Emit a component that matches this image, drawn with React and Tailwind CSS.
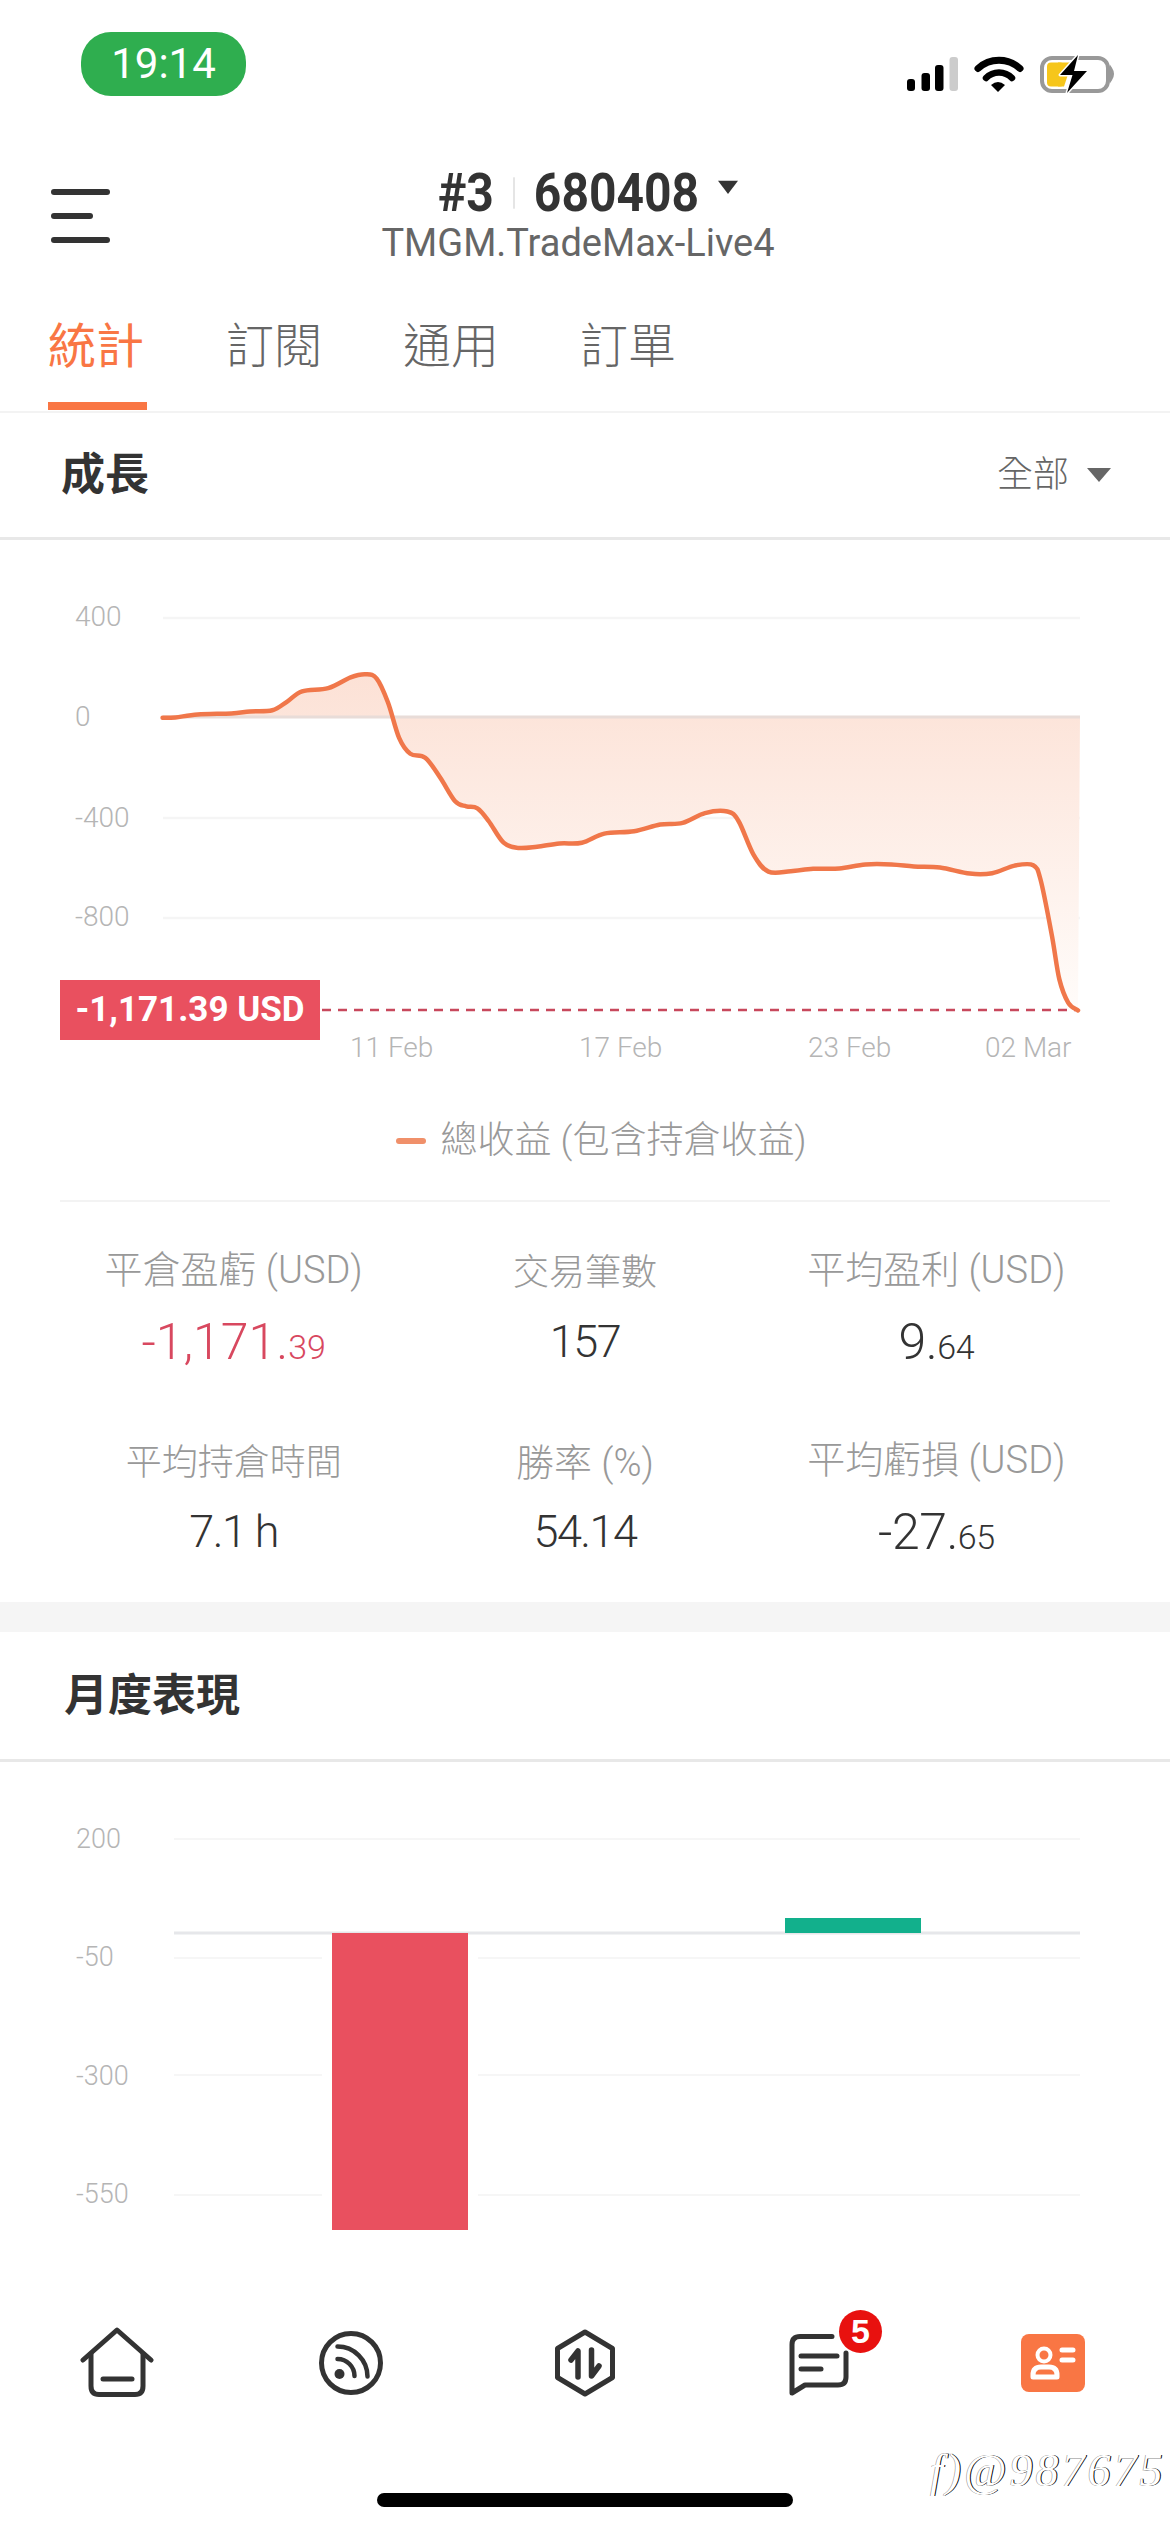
const pts = [[218,399],[235,398],[265,391],[310,388],[335,383],[365,380],[385,358],[405,332],[440,324],[470,297],[490,289],[505,300],[520,360],[535,450],[550,490],[570,500],[590,550],[610,610],[625,623],[640,628],[655,660],[675,715],[695,728],[720,725],[750,717],[780,715],[810,692],[850,686],[885,669],[915,665],[945,640],[975,636],[990,660],[1010,745],[1030,788],[1060,787],[1090,781],[1125,780],[1160,770],[1195,770],[1225,775],[1260,778],[1300,793],[1330,792],[1360,773],[1385,772],[1395,810],[1410,950],[1420,1060],[1432,1120],[1445,1139]].map(([x, y]) => [x * 0.746, 560 + y * 0.3954]);

function smooth(p) {
  let d = `M${p[0][0].toFixed(1)} ${p[0][1].toFixed(1)}`;
  for (let i = 0; i < p.length - 1; i++) {
    const a = p[Math.max(i - 1, 0)], b = p[i], c = p[i + 1], e = p[Math.min(i + 2, p.length - 1)];
    const c1 = [b[0] + (c[0] - a[0]) / 6, b[1] + (c[1] - a[1]) / 6];
    const c2 = [c[0] - (e[0] - b[0]) / 6, c[1] - (e[1] - b[1]) / 6];
    d += ` C${c1[0].toFixed(1)} ${c1[1].toFixed(1)} ${c2[0].toFixed(1)} ${c2[1].toFixed(1)} ${c[0].toFixed(1)} ${c[1].toFixed(1)}`;
  }
  return d;
}
const line = smooth(pts);
const area = `${line} L1080 717 L163 717 Z`;

function Stat({ label, children, lift, cjk }) {
  return (
    <div className="flex flex-col items-center">
      <div className={(lift ? "mt-[3px] " : "") + (cjk ? "text-[36px] " : "text-[38px] ") + "h-[40px] leading-[40px] text-[#999999] font-light whitespace-nowrap"}>{label}</div>
      <div className={lift ? "h-[60px] mt-[19px] text-[45px] leading-[60px] tracking-[-1.5px] text-[#333333] font-light whitespace-nowrap" : "h-[60px] mt-[22px] text-[45px] leading-[60px] tracking-[-1.5px] text-[#333333] font-light whitespace-nowrap"}>{children}</div>
    </div>
  );
}

const Big = ({ big, small, red }) => (
  <span className={red ? "text-[50px] tracking-[0px] text-[#d8485f]" : "text-[50px] tracking-[-0.5px]"}>
    {big}<span className="text-[34px]">{small}</span>
  </span>
);

export default function App() {
  return (
    <div className="w-[1170px] h-[2532px] bg-white overflow-hidden relative flex flex-col [font-family:Roboto,'Noto_Sans_CJK_TC',sans-serif]">
      {/* status bar */}
      <div className="h-[130px] flex justify-between items-start pl-[81px] pr-[53px]">
        <div className="mt-[32px] w-[165px] h-[64px] rounded-[30px] bg-[#2fae4f] text-white text-[42px] leading-[64px] text-center">19:14</div>
        <svg viewBox="905 52 212 44" className="w-[212px] h-[44px] mt-[52px]">
          <rect x="907" y="79" width="8" height="12" rx="3" fill="#000" />
          <rect x="921.5" y="73" width="8.5" height="18" rx="3" fill="#000" />
          <rect x="935" y="65" width="8.5" height="26" rx="3" fill="#000" />
          <rect x="949.5" y="57" width="8.5" height="34" rx="3" fill="#cccccc" />
          <path d="M978 68.5A31 31 0 0 1 1020 68.5" fill="none" stroke="#000" strokeWidth="7" strokeLinecap="round" />
          <path d="M986 78A18 18 0 0 1 1012 78" fill="none" stroke="#000" strokeWidth="6.5" strokeLinecap="round" />
          <path d="M991 85Q998 79 1005 85L998 92Z" fill="#000" />
          <rect x="1042" y="58" width="66" height="33" rx="10" fill="none" stroke="#999999" strokeWidth="4" />
          <path d="M1111 68Q1115 74 1111 80Z" fill="#999999" stroke="#999999" strokeWidth="2" />
          <rect x="1047" y="62.5" width="17" height="24" rx="4" fill="#f6c61b" />
          <path d="M1058 62.5h14l-8 24h-6z" fill="#f6c61b" />
          <path d="M1078 55L1060 75H1072.5L1067 93L1087 71H1074Z" fill="#000" stroke="#fff" strokeWidth="3" strokeLinejoin="round" paintOrder="stroke" />
        </svg>
      </div>

      {/* header */}
      <div className="h-[160px] relative flex flex-col items-center pt-[35px] shrink-0">
        <div className="absolute left-[51px] top-[59px] flex flex-col gap-[18px]">
          <div className="w-[59px] h-[6px] rounded-full bg-[#333333]" />
          <div className="w-[42px] h-[6px] rounded-full bg-[#333333]" />
          <div className="w-[59px] h-[6px] rounded-full bg-[#333333]" />
        </div>
        <div className="flex items-center h-[56px] text-[48px] leading-[56px] font-bold text-[#333333] ml-[6px] scale-y-[1.12]">
          <span>#3</span>
          <span className="w-[2px] h-[28px] bg-[#e5e5e5] mx-[19px]" />
          <span>680408</span>
          <span className="w-0 h-0 border-x-[10px] border-x-transparent border-t-[12px] border-t-[#333333] ml-[19px] mb-[10px]" />
        </div>
        <div className="mr-[14px] text-[38px] leading-[44px] text-[#666666] whitespace-nowrap">TMGM.TradeMax-Live4</div>
      </div>

      {/* tabs */}
      <div className="h-[123px] border-b-2 border-[#f3f3f3] flex items-start pl-[48px] gap-[81px] text-[48px] leading-[60px] text-[#666666] shrink-0 font-light">
        <div className="w-[99px] h-[120px] pt-[27px] border-b-[8px] border-[#f97644] text-[#f97644] font-normal mr-[-2px] whitespace-nowrap">統計</div>
        <div className="pt-[27px] whitespace-nowrap">訂閱</div>
        <div className="pt-[27px] whitespace-nowrap">通用</div>
        <div className="pt-[27px] whitespace-nowrap">訂單</div>
      </div>

      {/* growth header */}
      <div className="h-[127px] border-b-[3px] border-[#e8e8e8] flex items-center justify-between pl-[61px] pr-[59px] shrink-0">
        <div className="text-[44px] font-bold text-[#333333] leading-[60px]">成長</div>
        <div className="flex items-center gap-[18px]">
          <span className="text-[36px] text-[#666666] font-light leading-[50px]">全部</span>
          <span className="w-0 h-0 border-x-[12px] border-x-transparent border-t-[14px] border-t-[#666666]" />
        </div>
      </div>

      {/* chart */}
      <div className="relative h-[570px] shrink-0">
        <svg viewBox="0 540 1170 570" className="w-[1170px] h-[570px] block">
          <defs>
            <linearGradient id="fillG" gradientUnits="userSpaceOnUse" x1="0" y1="660" x2="0" y2="1010">
              <stop offset="0" stopColor="#fce0d4" />
              <stop offset="1" stopColor="#fffcfa" />
            </linearGradient>
          </defs>
          {[618, 818, 918].map((y) => <line key={y} x1="163" x2="1080" y1={y} y2={y} stroke="#f5f5f5" strokeWidth="2.5" />)}
          <path d={area} fill="url(#fillG)" />
          <line x1="163" x2="1080" y1="717" y2="717" stroke="#e8dcd8" strokeWidth="3" />
          <line x1="322" x2="1078" y1="1010" y2="1010" stroke="#c8485c" strokeWidth="2.5" strokeDasharray="9 7" />
          <path d={line} fill="none" stroke="#f0774a" strokeWidth="4.5" strokeLinejoin="round" strokeLinecap="round" />
          <g fontSize="28" fontWeight="300" fill="#b5b5b5">
            <text x="75" y="626">400</text>
            <text x="75" y="726">0</text>
            <text x="75" y="827">-400</text>
            <text x="75" y="926">-800</text>
            <text x="350" y="1057">11 Feb</text>
            <text x="579" y="1057">17 Feb</text>
            <text x="808" y="1057">23 Feb</text>
            <text x="985" y="1057">02 Mar</text>
          </g>
        </svg>
        <div className="absolute left-[60px] top-[440px] w-[260px] h-[60px] bg-[#e9505f] text-white text-[35px] font-bold leading-[60px] text-center whitespace-nowrap">-1,171.39 USD</div>
      </div>

      {/* legend */}
      <div className="h-[90px] flex items-start justify-center gap-[15px] shrink-0 pt-[8px] pl-[32px]">
        <span className="w-[30px] h-[6px] mt-[20px] bg-[#f0906a] rounded-full" />
        <span className="text-[37px] leading-[46px] text-[#999999] font-light whitespace-nowrap">總收益 (包含持倉收益)</span>
      </div>
      <div className="mx-[60px] h-[2px] bg-[#f3f3f3] shrink-0" />

      {/* stats */}
      <div className="grid grid-cols-3 content-start px-[58px] pt-[48px] gap-y-[68px] h-[400px] shrink-0">
        <Stat label="平倉盈虧 (USD)"><Big big="-1,171." small="39" red /></Stat>
        <Stat label="交易筆數" lift cjk>157</Stat>
        <Stat label="平均盈利 (USD)"><Big big="9." small="64" /></Stat>
        <Stat label="平均持倉時間" lift cjk>7.1 h</Stat>
        <Stat label="勝率 (%)" lift>54.14</Stat>
        <Stat label="平均虧損 (USD)"><Big big="-27." small="65" /></Stat>
      </div>

      <div className="h-[30px] bg-[#f5f5f5] shrink-0" />

      {/* monthly */}
      <div className="h-[130px] border-b-[3px] border-[#e8e8e8] flex items-center pl-[64px] shrink-0">
        <div className="text-[44px] font-bold text-[#333333] leading-[60px]">月度表現</div>
      </div>
      <div className="h-[519px] shrink-0">
        <svg viewBox="0 1762 1170 519" className="w-[1170px] h-[519px] block">
          {[1839, 1958, 2075, 2195].map((y) => <line key={y} x1="174" x2="1080" y1={y} y2={y} stroke="#f6f6f6" strokeWidth="2" />)}
          <rect x="322" y="1933" width="156" height="297" fill="#ffffff" />
          <line x1="174" x2="1080" y1="1933" y2="1933" stroke="#e6e7ea" strokeWidth="3" />
          <rect x="332" y="1933" width="136" height="297" fill="#e9505f" />
          <rect x="785" y="1918" width="136" height="15" fill="#12b08c" />
          <g fontSize="27" fontWeight="300" fill="#b5b5b5">
            <text x="76" y="1848">200</text>
            <text x="76" y="1966">-50</text>
            <text x="76" y="2085">-300</text>
            <text x="76" y="2203">-550</text>
          </g>
        </svg>
      </div>

      {/* bottom nav */}
      <div className="grid grid-cols-5 h-[211px] items-start pt-[46px] shrink-0">
        <div className="flex justify-center">
          <svg viewBox="80 2328 74 72" className="w-[74px] h-[72px]" fill="none" stroke="#333333" strokeWidth="5" strokeLinecap="round" strokeLinejoin="round">
            <path d="M83 2361L117 2331L151 2361" />
            <path d="M91 2355V2387Q91 2395.5 99 2395.5H135Q143 2395.5 143 2387V2355" />
            <path d="M103 2380H132" />
          </svg>
        </div>
        <div className="flex justify-center">
          <svg viewBox="314 2328 74 72" className="w-[74px] h-[72px]" fill="none" stroke="#333333" strokeWidth="5" strokeLinecap="round">
            <circle cx="351" cy="2364" r="29.5" />
            <circle cx="339.5" cy="2375" r="5" fill="#333333" stroke="none" />
            <path d="M337.5 2360A17 17 0 0 1 354.5 2377" strokeWidth="4.5" />
            <path d="M337.5 2347.5A30 30 0 0 1 367.5 2377.5" strokeWidth="4.5" />
          </svg>
        </div>
        <div className="flex justify-center">
          <svg viewBox="548 2328 74 72" className="w-[74px] h-[72px]" fill="none" stroke="#333333" strokeWidth="5" strokeLinecap="round" strokeLinejoin="round">
            <path d="M585 2333L612.5 2349.5V2378.5L585 2395L557.5 2378.5V2349.5Z" />
            <path d="M571 2361L578 2352V2378" strokeWidth="5.5" />
            <path d="M591.5 2351V2377L599 2367" strokeWidth="5.5" />
          </svg>
        </div>
        <div className="flex justify-center relative">
          <svg viewBox="782 2328 74 72" className="w-[74px] h-[72px]" fill="none" stroke="#333333" strokeWidth="5" strokeLinecap="round" strokeLinejoin="round">
            <path d="M832 2337.5H800Q792 2337.5 792 2345.5V2394L805 2386H838Q846 2386 846 2378V2354" />
            <path d="M801 2357H837" />
            <path d="M801 2370H821" />
          </svg>
          <div className="absolute left-[137px] top-[-17px] w-[43px] h-[43px] rounded-full bg-[#e8110f] text-white text-[34px] font-bold leading-[43px] text-center [font-family:'Liberation_Sans',sans-serif]">5</div>
        </div>
        <div className="flex justify-center">
          <svg viewBox="1016 2328 74 72" className="w-[74px] h-[72px]">
            <rect x="1021" y="2335" width="64" height="58" rx="8" fill="#f97644" />
            <circle cx="1044" cy="2356" r="6.5" fill="none" stroke="#fff" strokeWidth="4" />
            <path d="M1033 2378V2376Q1033 2368 1041 2368H1049Q1057 2368 1057 2376V2378Z" fill="#f97644" stroke="#fff" strokeWidth="5" strokeLinejoin="round" />
            <path d="M1062 2351H1073M1062 2361H1073" stroke="#fff" strokeWidth="5" strokeLinecap="round" />
          </svg>
        </div>
      </div>

      {/* home indicator */}
      <div className="absolute left-[377px] top-[2493px] w-[416px] h-[14px] rounded-full bg-black" />
      <div className="absolute left-[930px] top-[2444px] text-[46px] leading-[54px] italic tracking-[3px] font-thin text-white whitespace-nowrap [font-family:'Liberation_Serif',serif] [text-shadow:1px_0_0_#000,-0.5px_0_0_#888]">f)@987675</div>
    </div>
  );
}
